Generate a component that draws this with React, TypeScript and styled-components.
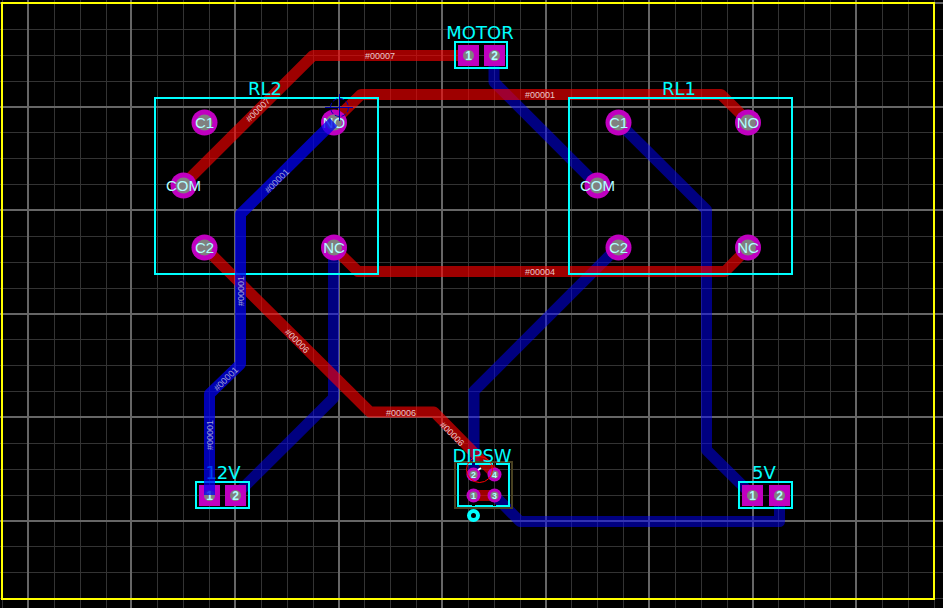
import React from "react";
import styled, { createGlobalStyle } from "styled-components";

const GlobalStyle = createGlobalStyle`
  body { margin: 0; background: #000; }
`;

const Editor = styled.main`
  width: 100%;
  overflow: hidden;
  background: #000;
`;

const Board = styled.svg`
  display: block;
  width: 100%;
  height: auto;
`;

const GridLine = styled.path<{ $major?: boolean }>`
  fill: none;
  stroke: ${(p) => (p.$major ? "#666" : "#333")};
  stroke-width: ${(p) => (p.$major ? 2 : 1)};
  shape-rendering: crispEdges;
`;

const Edge = styled.rect`
  fill: none;
  stroke: #ff0;
  stroke-width: 2;
  shape-rendering: crispEdges;
`;

const layers = { top: "#ff0000", bottom: "#0000ff", active: "#0000f0" };
const layerOpacity = { top: 0.62, bottom: 0.5, active: 0.74 };
type Layer = keyof typeof layers;

const Track = styled.polyline<{ $layer: Layer }>`
  fill: none;
  stroke: ${(p) => layers[p.$layer]};
  stroke-opacity: ${(p) => layerOpacity[p.$layer]};
  stroke-width: 11;
  stroke-linejoin: round;
`;

const NetLabel = styled.text<{ $dim?: boolean }>`
  font: 9px "Liberation Sans", Arial, sans-serif;
  fill: ${(p) => (p.$dim ? "#a0a0d8" : "#e8c8c8")};
  text-anchor: middle;
`;

const Outline = styled.rect`
  fill: none;
  stroke: #0ff;
  stroke-width: 2;
  shape-rendering: crispEdges;
`;

const Silk = styled.text`
  font: 18px "DejaVu Sans", sans-serif;
  fill: #0ff;
  text-anchor: middle;
`;

const Copper = styled.circle`
  fill: #c000c0;
`;

const SquareCopper = styled.rect`
  fill: #c000c0;
  shape-rendering: crispEdges;
`;

const Hole = styled.circle`
  fill: #808080;
`;

const PinName = styled.text<{ $size: number; $bold?: boolean }>`
  font: ${(p) => (p.$bold ? "bold " : "")}${(p) => p.$size}px "Liberation Sans", Arial, sans-serif;
  fill: #b0ffff;
  text-anchor: middle;
`;

const steps = Array.from({ length: 40 }, (_, i) => i);
const minorX = steps.map((i) => Math.round(2 + i * 25.88) + 0.5);
const minorY = steps.slice(0, 24).map((i) => Math.round(3 + i * 25.88) + 0.5);
const majorX = steps.slice(0, 9).map((i) => Math.round(27.9 + i * 103.55));
const majorY = steps.slice(0, 6).map((i) => Math.round(3 + i * 103.6));

const Grid = () => (
  <g>
    <GridLine d={minorX.map((x) => `M${x} 0V608`).join("") + minorY.map((y) => `M0 ${y}H943`).join("")} />
    <GridLine $major d={majorX.map((x) => `M${x} 0V608`).join("") + majorY.map((y) => `M0 ${y}H943`).join("")} />
  </g>
);

const bottomTracks = [
  "494,56 494,82 597,185",
  "618,122 706.5,210 706.5,450 752,495",
  "618,247 474,391 474,474",
  "333.5,247 333.5,398 235,496",
  "494,495 520,521.5 779.5,521.5 779.5,495",
];
const topTracks = [
  "183,185 313,55.5 468,55.5",
  "333,122 361,94.5 721,94.5 749,122",
  "333,247 358,271.5 725,271.5 749,247",
  "204,247 370,412 434,412 495,474",
  "473,495.5 494,495.5",
];

const nets = [
  { x: 380, y: 56, a: 0, t: "#00007" },
  { x: 258, y: 110, a: -45, t: "#00007" },
  { x: 540, y: 95, a: 0, t: "#00001" },
  { x: 540, y: 272, a: 0, t: "#00004" },
  { x: 297, y: 341, a: 45, t: "#00006" },
  { x: 401, y: 413, a: 0, t: "#00006" },
  { x: 452, y: 434, a: 45, t: "#00006" },
];
const activeNets = [
  { x: 277, y: 181, a: -45, t: "#00001" },
  { x: 241, y: 291, a: -90, t: "#00001" },
  { x: 226, y: 379, a: -45, t: "#00001" },
  { x: 210, y: 435, a: -90, t: "#00001" },
];

type NetProps = { x: number; y: number; a: number; t: string; dim?: boolean };
const Net = ({ x, y, a, t, dim }: NetProps) => (
  <NetLabel $dim={dim} dy={3} transform={`translate(${x} ${y}) rotate(${a})`}>{t}</NetLabel>
);

type PadProps = { x: number; y: number; name: string };
const RelayPad = ({ x, y, name }: PadProps) => (
  <g>
    <Copper cx={x} cy={y} r={13} />
    <Hole cx={x} cy={y} r={8} />
    <PinName $size={15} x={x} y={y + 5}>{name}</PinName>
  </g>
);
const SquarePad = ({ x, y, name }: PadProps) => (
  <g>
    <SquareCopper x={x} y={y} width={21} height={21} />
    <Hole cx={x + 10.5} cy={y + 10.5} r={5.5} />
    <PinName $size={12} $bold x={x + 10.5} y={y + 15}>{name}</PinName>
  </g>
);
const SwitchPad = ({ x, y, name }: PadProps) => (
  <g>
    <Copper cx={x} cy={y} r={7} />
    <Hole cx={x} cy={y} r={4} />
    <PinName $size={9} $bold x={x} y={y + 3}>{name}</PinName>
  </g>
);

const Relay = ({ x, name }: { x: number; name: string }) => (
  <g>
    <Outline x={x} y={98} width={223} height={176} />
    <Silk x={x + 110} y={95}>{name}</Silk>
    <RelayPad x={x + 49.5} y={122.5} name="C1" />
    <RelayPad x={x + 28.5} y={185.5} name="COM" />
    <RelayPad x={x + 49.5} y={247.5} name="C2" />
    <RelayPad x={x + 179} y={122.5} name="NO" />
    <RelayPad x={x + 179} y={247.5} name="NC" />
  </g>
);

type HeaderProps = { x: number; y: number; w: number; second: number; name: string; nameX: number };
const Header = ({ x, y, w, second, name, nameX }: HeaderProps) => (
  <g>
    <SquarePad x={x + 3} y={y + 3} name="1" />
    <SquarePad x={x + second} y={y + 3} name="2" />
    <Outline x={x} y={y} width={w} height={26} />
    <Silk x={nameX} y={y - 3}>{name}</Silk>
  </g>
);

const Cursor = () => (
  <g fill="none" stroke="#0000b0">
    <circle cx={339.5} cy={107.5} r={9} strokeDasharray="5 2" />
    <path d="M325 107.5H353M339.5 94V121" />
  </g>
);

const DipSwitch = () => (
  <g>
    <rect x={455} y={462} width={57} height={46} fill="none" stroke="#484020" strokeWidth={2} />
    <SwitchPad x={473.5} y={474.5} name="2" />
    <SwitchPad x={494.5} y={474.5} name="4" />
    <SwitchPad x={473.5} y={495.5} name="1" />
    <SwitchPad x={494.5} y={495.5} name="3" />
    <path d="M472 464H458V506H472M475 464H493M496 464H509V506H496M475 506H493" fill="none" stroke="#0ff" strokeWidth={2} />
    <path d="M472 506.5H475M493 506.5H496" fill="none" stroke="#0ff" />
    <circle cx={479.5} cy={469.5} r={13} fill="none" stroke="#f00" />
    <path d="M478 470L481 468" stroke="#fff" strokeWidth={2} />
    <circle cx={473.5} cy={515.5} r={4.5} fill="none" stroke="#0ff" strokeWidth={4} />
    <Silk x={482} y={462}>DIPSW</Silk>
  </g>
);

export default function App() {
  return (
    <Editor>
      <GlobalStyle />
      <Board viewBox="0 0 943 608" role="img" aria-label="Circuit board layout">
        <Grid />
        {bottomTracks.map((p) => <Track key={p} $layer="bottom" points={p} />)}
        {topTracks.map((p) => <Track key={p} $layer="top" points={p} />)}
        {nets.map((n, i) => <Net key={i} {...n} />)}
        <Relay x={155} name="RL2" />
        <Relay x={569} name="RL1" />
        <Header x={455} y={42} w={52} second={29} name="MOTOR" nameX={480} />
        <Header x={196} y={482} w={53} second={29} name="12V" nameX={223} />
        <Header x={739} y={482} w={53} second={30} name="5V" nameX={764} />
        <DipSwitch />
        <Cursor />
        <Track $layer="active" points="333.5,122 240.5,214 240.5,364 209.5,394 209.5,495" />
        {activeNets.map((n, i) => <Net key={i} {...n} dim />)}
        <Edge x={2} y={3} width={932} height={596} />
      </Board>
    </Editor>
  );
}
